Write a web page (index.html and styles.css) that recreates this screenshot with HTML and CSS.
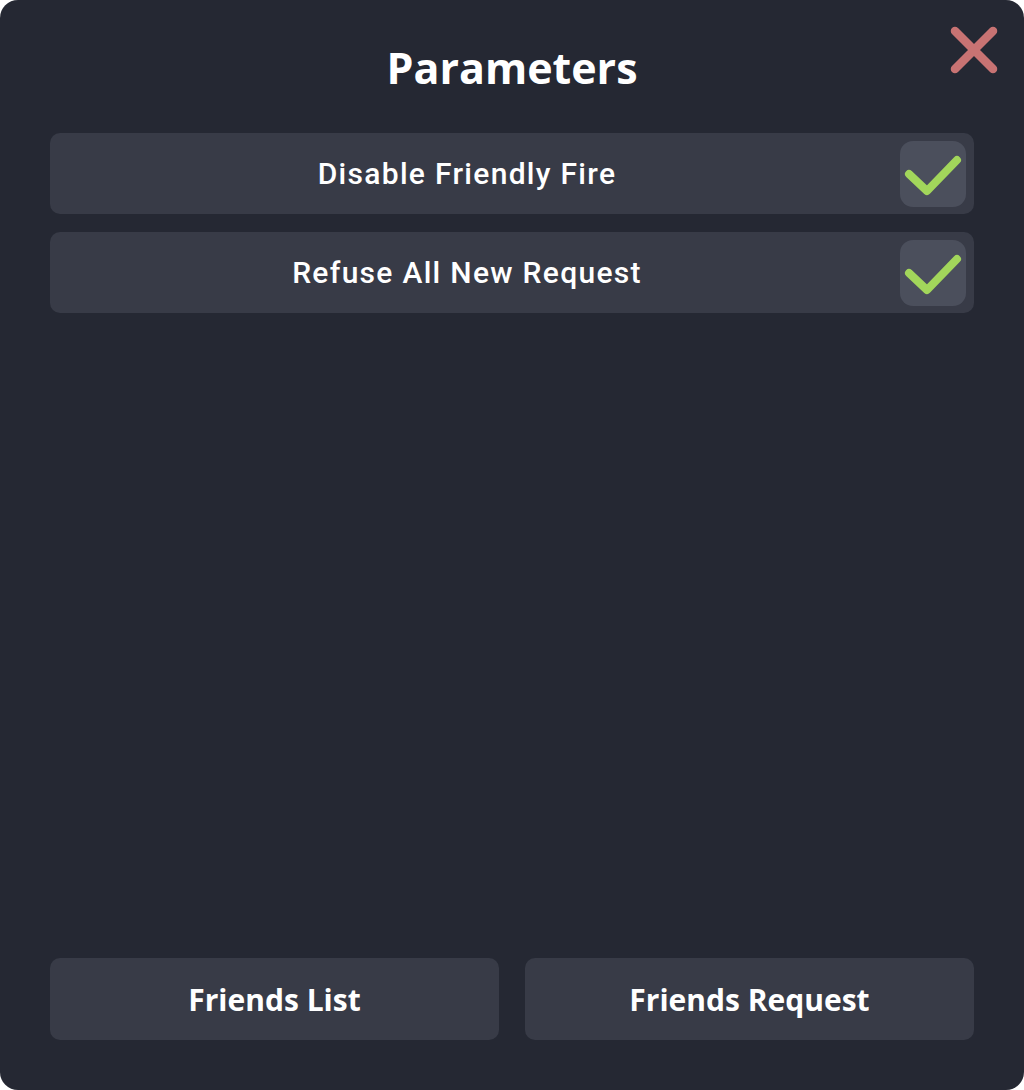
FILE: index.html
```html
<!DOCTYPE html>
<html lang="en">
<head>
<meta charset="utf-8">
<title>Parameters</title>
<link rel="stylesheet" href="styles.css">
</head>
<body>
<div class="panel">
  <h1 class="title">Parameters</h1>
  <button class="close" aria-label="Close">
    <svg width="48" height="48" viewBox="0 0 48 48"><path d="M5 5 L43 43 M43 5 L5 43" stroke="#c87373" stroke-width="8.5" stroke-linecap="round" fill="none"/></svg>
  </button>
  <div class="options">
    <div class="option">
      <span class="label">Disable Friendly Fire</span>
      <span class="check"><svg width="66" height="66" viewBox="0 0 66 66"><path d="M9 33 L27 50 L57 19" stroke="#a2d65b" stroke-width="8" stroke-linecap="round" stroke-linejoin="round" fill="none"/></svg></span>
    </div>
    <div class="option">
      <span class="label">Refuse All New Request</span>
      <span class="check"><svg width="66" height="66" viewBox="0 0 66 66"><path d="M9 33 L27 50 L57 19" stroke="#a2d65b" stroke-width="8" stroke-linecap="round" stroke-linejoin="round" fill="none"/></svg></span>
    </div>
  </div>
  <div class="footer">
    <button class="btn">Friends List</button>
    <button class="btn">Friends Request</button>
  </div>
</div>
</body>
</html>
```
FILE: styles.css
```css
html, body {
  margin: 0;
  padding: 0;
  background: #ffffff;
}
.panel {
  position: relative;
  box-sizing: border-box;
  height: 1090px;
  background: #252833;
  border-radius: 18px;
  padding: 0 50px 50px;
  display: flex;
  flex-direction: column;
}
.title {
  margin: 0;
  padding-top: 44px;
  line-height: 48px;
  text-align: center;
  color: #ffffff;
  font-family: "Open Sans", sans-serif;
  font-weight: 700;
  font-size: 43px;
}
.close {
  position: absolute;
  top: 26px;
  right: 26px;
  width: 48px;
  height: 48px;
  padding: 0;
  border: 0;
  background: none;
}
.close svg { display: block; }
.options {
  margin-top: 41px;
  display: flex;
  flex-direction: column;
  gap: 18px;
}
.option {
  height: 81px;
  background: #383b47;
  border-radius: 10px;
  display: flex;
  align-items: center;
  padding-right: 8px;
  gap: 16px;
}
.label {
  flex: 1;
  text-align: center;
  color: #ffffff;
  font-family: Roboto, sans-serif;
  font-weight: 500;
  font-size: 30px;
  letter-spacing: 1.3px;
}
.check {
  width: 66px;
  height: 66px;
  background: #4b4f5c;
  border-radius: 13px;
}
.check svg { display: block; }
.footer {
  margin-top: auto;
  display: flex;
  gap: 26px;
}
.btn {
  flex: 1;
  height: 82px;
  background: #383b47;
  border: 0;
  border-radius: 10px;
  color: #ffffff;
  font-family: "Open Sans", sans-serif;
  font-weight: 700;
  font-size: 30px;
}
```
